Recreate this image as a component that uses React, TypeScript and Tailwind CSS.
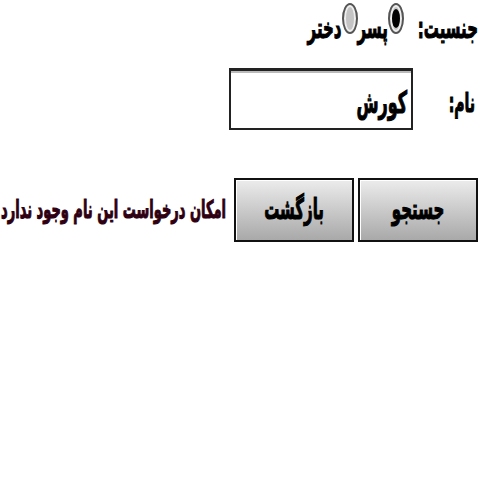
import React from 'react';

const fa = { fontFamily: '"DejaVu Sans", sans-serif' };

function Radio({ checked }: { checked?: boolean }) {
  return (
    <span className="box-border flex h-[31px] w-[16px] min-w-[16px] shrink-0 items-center justify-center rounded-[50%] border-2 border-[#555] bg-[#c4c4c4] shadow-[inset_0_0_0_2px_#eee]">
      {checked && <span className="block h-[19px] w-[8px] rounded-[50%] bg-black" />}
    </span>
  );
}

function Btn({ label }: { label: string }) {
  return (
    <button className="flex h-[64px] w-[120px] shrink-0 items-center justify-center border-2 border-[#111] bg-gradient-to-b from-[#ececec] to-[#a9a9a9] shadow-[inset_1px_1px_0_#fff]">
      <span className="inline-block text-[15px] font-bold text-black [-webkit-text-stroke:0.6px_black] [transform:scaleY(1.9)]">
        {label}
      </span>
    </button>
  );
}

export default function App() {
  return (
    <div dir="rtl" style={fa} className="h-[480px] w-[480px] overflow-hidden bg-white text-black">
      {/* gender */}
      <div className="flex h-[58px] items-start pr-[2px] pt-[3px]">
        <span className="ml-[14px] mt-[15px] inline-block text-[15px] font-bold [-webkit-text-stroke:0.6px_black] [transform:scaleY(1.9)]">جنسیت:</span>
        <Radio checked />
        <span className="mt-[15px] inline-block text-[15px] font-bold [-webkit-text-stroke:0.6px_black] [transform:scaleY(1.9)]">پسر</span>
        <Radio />
        <span className="mt-[15px] inline-block text-[15px] font-bold [-webkit-text-stroke:0.6px_black] [transform:scaleY(1.9)]">دختر</span>
      </div>

      {/* name */}
      <div className="mt-[10px] flex items-center">
        <span className="mr-[5px] inline-block w-[62px] pt-[4px] text-[14px] font-bold [-webkit-text-stroke:0.6px_black] [transform:scaleY(1.9)]">نام:</span>
        <div className="flex h-[62px] w-[184px] items-center border-2 border-[#222] border-t-[3px] bg-white pr-[4px] shadow-[inset_0_2px_0_#bbb]">
          <span className="inline-block pt-[4px] text-[16px] font-bold [-webkit-text-stroke:0.6px_black] [transform:scaleY(1.9)]">کورش</span>
        </div>
      </div>

      {/* actions */}
      <div className="mt-[48px] flex items-center gap-[4px] pr-[2px]">
        <Btn label="جستجو" />
        <Btn label="بازگشت" />
        <span className="mr-[4px] inline-block whitespace-nowrap text-[13px] font-bold text-[#2e0012] [-webkit-text-stroke:0.6px_#2e0012] [transform:scaleY(1.9)]">
          امکان درخواست این نام وجود ندارد
        </span>
      </div>
    </div>
  );
}
